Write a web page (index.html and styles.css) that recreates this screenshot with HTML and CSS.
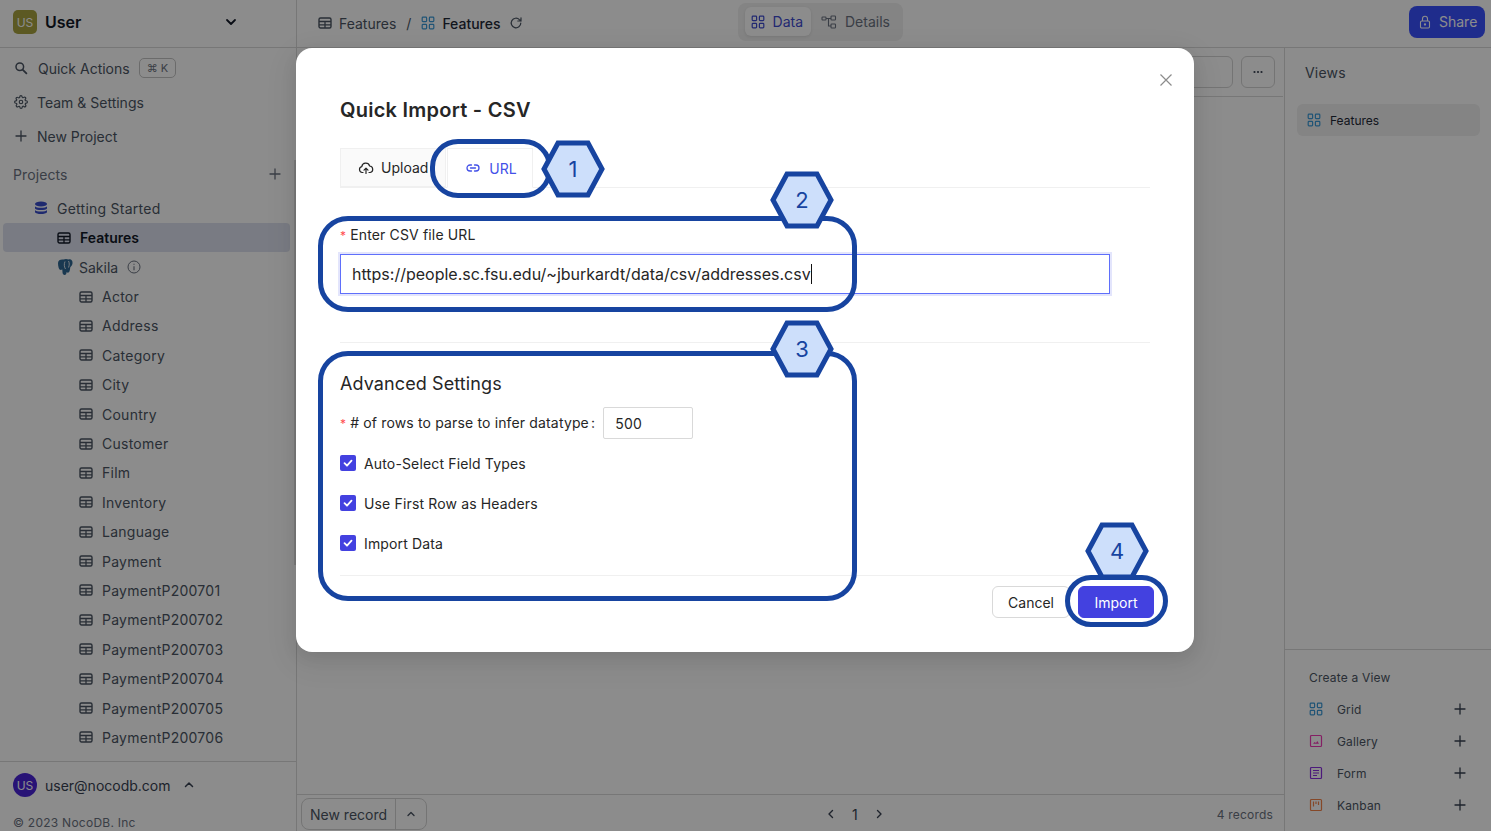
FILE: index.html
```html
<!DOCTYPE html>
<html lang="en">
<head>
    <meta charset="UTF-8">
    <title>NocoDB - Quick Import</title>
    <link rel="stylesheet" href="styles.css">
</head>
<body>
    <svg class="defs" width="0" height="0">
        <symbol id="i-table" viewBox="0 0 14 14"><rect x="1" y="2" width="12" height="10" rx="1.5" fill="none" stroke="currentColor" stroke-width="1.4"/><path d="M1 5.5h12M1 8.8h12M7 5.5V12" fill="none" stroke="currentColor" stroke-width="1.3"/></symbol>
        <symbol id="i-grid" viewBox="0 0 14 14"><g fill="none" stroke="currentColor" stroke-width="1.2"><rect x="1.2" y="1.2" width="4.4" height="4.4" rx=".8"/><rect x="8.4" y="1.2" width="4.4" height="4.4" rx=".8"/><rect x="1.2" y="8.4" width="4.4" height="4.4" rx=".8"/><rect x="8.4" y="8.4" width="4.4" height="4.4" rx=".8"/></g></symbol>
        <symbol id="i-plus" viewBox="0 0 14 14"><path d="M7 2v10M2 7h10" fill="none" stroke="currentColor" stroke-width="1.3" stroke-linecap="round"/></symbol>
    </svg>

    <div class="app">
        <aside class="sidebar">
            <div class="brand">
                <span class="brand-badge">US</span>
                <span class="brand-name">User</span>
                <svg class="brand-chevron" width="14" height="14" viewBox="0 0 14 14"><path d="M3 5l4 4 4-4" fill="none" stroke="currentColor" stroke-width="1.8" stroke-linecap="round" stroke-linejoin="round"/></svg>
            </div>
            <div class="side-menu">
                <div class="menu-item">
                    <svg width="14" height="14" viewBox="0 0 14 14"><circle cx="5.8" cy="5.8" r="3.8" fill="none" stroke="currentColor" stroke-width="1.5"/><path d="M8.6 8.6l3.8 3.8" stroke="currentColor" stroke-width="1.8" stroke-linecap="round"/></svg>
                    <span class="quick-label">Quick Actions</span><span class="kbd">⌘ K</span>
                </div>
                <div class="menu-item">
                    <svg width="14" height="14" viewBox="0 0 24 24" fill="none" stroke="currentColor" stroke-width="2"><circle cx="12" cy="12" r="3"/><path d="M19.4 15a1.65 1.65 0 0 0 .33 1.82l.06.06a2 2 0 1 1-2.83 2.83l-.06-.06a1.65 1.65 0 0 0-2.82 1.17V21a2 2 0 1 1-4 0v-.09a1.65 1.65 0 0 0-2.82-1.12l-.06.06a2 2 0 1 1-2.83-2.83l.06-.06a1.65 1.65 0 0 0-1.17-2.82H3a2 2 0 1 1 0-4h.09a1.65 1.65 0 0 0 1.12-2.82l-.06-.06a2 2 0 1 1 2.83-2.83l.06.06a1.65 1.65 0 0 0 2.82-1.17V3a2 2 0 1 1 4 0v.09a1.65 1.65 0 0 0 2.82 1.12l.06-.06a2 2 0 1 1 2.83 2.83l-.06.06a1.65 1.65 0 0 0 1.17 2.82H21a2 2 0 1 1 0 4h-.09a1.65 1.65 0 0 0-1.51 1z"/></svg>
                    <span>Team &amp; Settings</span>
                </div>
                <div class="menu-item">
                    <svg width="14" height="14"><use href="#i-plus"/></svg>
                    <span>New Project</span>
                </div>
            </div>
            <div class="projects-head">
                <span>Projects</span>
                <svg width="14" height="14"><use href="#i-plus"/></svg>
            </div>
            <div class="tree">
                <div class="tree-row project">
                    <svg class="db-icon" width="14" height="14" viewBox="0 0 14 14"><ellipse cx="7" cy="3" rx="6" ry="2.4" fill="currentColor"/><path d="M1 5.2c1 2 11 2 12 0v2.2c-1 2.2-11 2.2-12 0zM1 9c1 2 11 2 12 0v2.2c-1 2.4-11 2.4-12 0z" fill="currentColor"/></svg>
                    <span>Getting Started</span>
                </div>
                <div class="tree-row base active"><svg width="14" height="14"><use href="#i-table"/></svg><span>Features</span></div>
                <div class="tree-row base">
                    <svg class="pg-icon" width="18" height="18" viewBox="0 0 18 18"><path d="M2 5c0-3 3-4 5.500-3.500C9 .8 11 .8 12.500 1.500 15 .8 17 2.500 16.500 5.500c-.3 1.800-1.300 3-2.200 3.800-.2 1.500-.4 3-.8 4-.4 1.500-2 1.700-2.800.8-.4 1.500-.4 2.700-1.700 2.900-1.500.2-2.300-.8-2.500-2.400l-.2-3.100C4.500 12.500 3.300 11.800 2.700 10 2.200 8.500 2 6.500 2 5z" fill="currentColor"/><path d="M9 3.500c-1 2.500-1 5 .5 7.500M12.500 3c1 2 1 4 0 6.500" fill="none" stroke="#fff" stroke-width=".8"/></svg>
                    <span class="sakila">Sakila</span>
                    <svg class="info-icon" width="14" height="14" viewBox="0 0 14 14"><circle cx="7" cy="7" r="6" fill="none" stroke="currentColor" stroke-width="1"/><path d="M7 6.200v4M7 3.800v1" stroke="currentColor" stroke-width="1.100"/></svg>
                </div>
                <div class="tree-row table"><svg width="14" height="14"><use href="#i-table"/></svg><span>Actor</span></div>
                <div class="tree-row table"><svg width="14" height="14"><use href="#i-table"/></svg><span>Address</span></div>
                <div class="tree-row table"><svg width="14" height="14"><use href="#i-table"/></svg><span>Category</span></div>
                <div class="tree-row table"><svg width="14" height="14"><use href="#i-table"/></svg><span>City</span></div>
                <div class="tree-row table"><svg width="14" height="14"><use href="#i-table"/></svg><span>Country</span></div>
                <div class="tree-row table"><svg width="14" height="14"><use href="#i-table"/></svg><span>Customer</span></div>
                <div class="tree-row table"><svg width="14" height="14"><use href="#i-table"/></svg><span>Film</span></div>
                <div class="tree-row table"><svg width="14" height="14"><use href="#i-table"/></svg><span>Inventory</span></div>
                <div class="tree-row table"><svg width="14" height="14"><use href="#i-table"/></svg><span>Language</span></div>
                <div class="tree-row table"><svg width="14" height="14"><use href="#i-table"/></svg><span>Payment</span></div>
                <div class="tree-row table"><svg width="14" height="14"><use href="#i-table"/></svg><span>PaymentP200701</span></div>
                <div class="tree-row table"><svg width="14" height="14"><use href="#i-table"/></svg><span>PaymentP200702</span></div>
                <div class="tree-row table"><svg width="14" height="14"><use href="#i-table"/></svg><span>PaymentP200703</span></div>
                <div class="tree-row table"><svg width="14" height="14"><use href="#i-table"/></svg><span>PaymentP200704</span></div>
                <div class="tree-row table"><svg width="14" height="14"><use href="#i-table"/></svg><span>PaymentP200705</span></div>
                <div class="tree-row table"><svg width="14" height="14"><use href="#i-table"/></svg><span>PaymentP200706</span></div>
            </div>
            <div class="side-foot">
                <div class="user-row">
                    <span class="avatar">US</span>
                    <span>user@nocodb.com</span>
                    <svg width="12" height="12" viewBox="0 0 12 12"><path d="M2.500 7.500L6 4l3.500 3.500" fill="none" stroke="currentColor" stroke-width="1.500" stroke-linecap="round" stroke-linejoin="round"/></svg>
                </div>
                <div class="copyright">© 2023 NocoDB. Inc</div>
            </div>
            <div class="side-scroll"></div>
        </aside>

        <main class="main">
            <header class="topbar">
                <div class="crumbs">
                    <svg width="14" height="14"><use href="#i-table"/></svg>
                    <span>Features</span>
                    <span class="crumb-sep">/</span>
                    <svg class="grid-icon" width="14" height="14"><use href="#i-grid"/></svg>
                    <span class="crumb-current">Features</span>
                    <svg width="14" height="14" viewBox="0 0 14 14"><path d="M11.800 7a4.800 4.800 0 1 1-1.400-3.400L12 5M12 1.800V5H8.800" fill="none" stroke="currentColor" stroke-width="1.200" stroke-linecap="round" stroke-linejoin="round"/></svg>
                </div>
                <div class="mode-tabs">
                    <div class="mode-tab on"><svg width="14" height="14"><use href="#i-grid"/></svg>Data</div>
                    <div class="mode-tab">
                        <svg width="16" height="14" viewBox="0 0 16 14" fill="none" stroke="currentColor" stroke-width="1.100"><rect x="1" y="2" width="4" height="3" rx=".8"/><rect x="10" y="1" width="4.500" height="4" rx=".8"/><rect x="10" y="9" width="4.500" height="4" rx=".8"/><path d="M5 3.500h5M7.500 3.500V11H10"/></svg>
                        Details
                    </div>
                </div>
                <button class="share-btn" type="button">
                    <svg width="14" height="14" viewBox="0 0 14 14" fill="none" stroke="currentColor" stroke-width="1.100"><rect x="2.500" y="6" width="9" height="7" rx="1.200"/><path d="M4.500 6V3.800a2.500 2.500 0 0 1 5 0V6"/><circle cx="7" cy="9.500" r=".6" fill="currentColor"/></svg>
                    Share
                </button>
            </header>
            <div class="content">
                <section class="center">
                    <div class="toolbar">
                        <div class="tool-box wide"></div>
                        <div class="tool-box">
                            <svg width="14" height="14" viewBox="0 0 14 14"><circle cx="3.500" cy="7" r="1.100" fill="currentColor"/><circle cx="7" cy="7" r="1.100" fill="currentColor"/><circle cx="10.500" cy="7" r="1.100" fill="currentColor"/></svg>
                        </div>
                    </div>
                    <div class="grid-area"></div>
                    <div class="pager">
                        <div class="new-record">
                            <span class="new-label">New record</span>
                            <span class="new-caret"><svg width="10" height="10" viewBox="0 0 10 10"><path d="M2 6.500L5 3.500l3 3" fill="none" stroke="currentColor" stroke-width="1.400" stroke-linecap="round" stroke-linejoin="round"/></svg></span>
                        </div>
                        <div class="pages">
                            <svg width="12" height="12" viewBox="0 0 12 12"><path d="M7.500 2.500L4 6l3.500 3.500" fill="none" stroke="currentColor" stroke-width="1.400" stroke-linecap="round" stroke-linejoin="round"/></svg>
                            <span>1</span>
                            <svg width="12" height="12" viewBox="0 0 12 12"><path d="M4.500 2.500L8 6l-3.500 3.500" fill="none" stroke="currentColor" stroke-width="1.400" stroke-linecap="round" stroke-linejoin="round"/></svg>
                        </div>
                        <span class="count">4 records</span>
                    </div>
                </section>
                <aside class="views">
                    <div class="views-title">Views</div>
                    <div class="view-current"><svg class="grid-icon" width="14" height="14"><use href="#i-grid"/></svg><span>Features</span></div>
                    <div class="create-view">
                        <div class="create-title">Create a View</div>
                        <div class="create-row">
                            <svg class="grid-icon" width="14" height="14"><use href="#i-grid"/></svg><span>Grid</span>
                            <svg class="add" width="14" height="14"><use href="#i-plus"/></svg>
                        </div>
                        <div class="create-row">
                            <svg class="gallery-icon" width="14" height="14" viewBox="0 0 14 14"><rect x="1.500" y="1.500" width="11" height="11" rx="1" fill="none" stroke="currentColor" stroke-width="1.200"/><path d="M4 9.800l1.500-1.700L7 9l1.300-2 1.700 2.800z" fill="currentColor"/></svg><span>Gallery</span>
                            <svg class="add" width="14" height="14"><use href="#i-plus"/></svg>
                        </div>
                        <div class="create-row">
                            <svg class="form-icon" width="14" height="14" viewBox="0 0 14 14" fill="none" stroke="currentColor" stroke-width="1.200"><rect x="1.500" y="1.500" width="11" height="11" rx="1"/><path d="M4 4.500h6M4 7h6M4 9.500h4"/></svg><span>Form</span>
                            <svg class="add" width="14" height="14"><use href="#i-plus"/></svg>
                        </div>
                        <div class="create-row">
                            <svg class="kanban-icon" width="14" height="14" viewBox="0 0 14 14" fill="none" stroke="currentColor" stroke-width="1.200"><rect x="1.500" y="1.500" width="11" height="11" rx="1"/><path d="M4.500 3.500v5M7 3.500v2.500M9.500 3.500v3.500"/></svg><span>Kanban</span>
                            <svg class="add" width="14" height="14"><use href="#i-plus"/></svg>
                        </div>
                    </div>
                </aside>
            </div>
        </main>
    </div>

    <div class="mask"></div>

    <div class="modal">
        <button class="modal-close" type="button" aria-label="Close">
            <svg width="14" height="14" viewBox="0 0 14 14"><path d="M1.500 1.500l11 11M12.500 1.500l-11 11" fill="none" stroke="currentColor" stroke-width="1.200"/></svg>
        </button>
        <h2 class="modal-title">Quick Import - CSV</h2>
        <div class="tabs">
            <div class="tab">
                <svg width="16" height="16" viewBox="0 0 16 16" fill="none" stroke="currentColor" stroke-width="1.200" stroke-linecap="round" stroke-linejoin="round"><path d="M5 12.500H4.200A3 3 0 0 1 3.800 6.600 4 4 0 0 1 11.600 6a3.300 3.300 0 0 1 .6 6.500H11"/><path d="M8 13.500V8.500M6 10.200l2-2 2 2"/></svg>
                Upload
            </div>
            <div class="tab on">
                <svg width="16" height="16" viewBox="0 0 16 16" fill="none" stroke="currentColor" stroke-width="1.300" stroke-linecap="round"><path d="M6.500 5H5a3 3 0 0 0 0 6h1.500M9.500 5H11a3 3 0 0 1 0 6H9.500M5.500 8h5"/></svg>
                URL
            </div>
        </div>
        <div class="url-field">
            <label class="field-label" for="csvUrl"><span class="req">*</span>Enter CSV file URL</label>
            <div class="url-input" id="csvUrl">https://people.sc.fsu.edu/~jburkardt/data/csv/addresses.csv<span class="caret"></span></div>
        </div>
        <hr class="rule">
        <h3 class="adv-title">Advanced Settings</h3>
        <div class="rows-field">
            <label class="field-label"><span class="req">*</span># of rows to parse to infer datatype<span class="colon">:</span></label>
            <div class="rows-input">500</div>
        </div>
        <div class="check-row"><span class="check"><svg width="12" height="12" viewBox="0 0 12 12"><path d="M2.500 6.200l2.500 2.500 4.500-5" fill="none" stroke="#fff" stroke-width="1.800" stroke-linecap="round" stroke-linejoin="round"/></svg></span>Auto-Select Field Types</div>
        <div class="check-row"><span class="check"><svg width="12" height="12" viewBox="0 0 12 12"><path d="M2.500 6.200l2.500 2.500 4.500-5" fill="none" stroke="#fff" stroke-width="1.800" stroke-linecap="round" stroke-linejoin="round"/></svg></span>Use First Row as Headers</div>
        <div class="check-row"><span class="check"><svg width="12" height="12" viewBox="0 0 12 12"><path d="M2.500 6.200l2.500 2.500 4.500-5" fill="none" stroke="#fff" stroke-width="1.800" stroke-linecap="round" stroke-linejoin="round"/></svg></span>Import Data</div>
        <div class="modal-foot">
            <button class="btn" type="button">Cancel</button>
            <button class="btn primary" type="button">Import</button>
        </div>
    </div>

    <!-- annotations drawn on top of the screenshot -->
    <div class="ring ring-1"></div>
    <div class="ring ring-2"></div>
    <div class="ring ring-3"></div>
    <div class="ring ring-4"></div>
    <div class="hex hex-1"><svg width="64" height="58" viewBox="0 0 64 58"><polygon points="17,3 47,3 61,29 47,55 17,55 3,29"/></svg><span>1</span></div>
    <div class="hex hex-2"><svg width="64" height="58" viewBox="0 0 64 58"><polygon points="17,3 47,3 61,29 47,55 17,55 3,29"/></svg><span>2</span></div>
    <div class="hex hex-3"><svg width="64" height="58" viewBox="0 0 64 58"><polygon points="17,3 47,3 61,29 47,55 17,55 3,29"/></svg><span>3</span></div>
    <div class="hex hex-4"><svg width="64" height="58" viewBox="0 0 64 58"><polygon points="17,3 47,3 61,29 47,55 17,55 3,29"/></svg><span>4</span></div>
</body>
</html>
```

FILE: styles.css
```css
* {
    box-sizing: border-box;
}
html, body {
    margin: 0;
    height: 100%;
    overflow: hidden;
}
body {
    position: relative;
    font-family: Inter, "Noto Sans", sans-serif;
    font-size: 14px;
    color: #1f2937;
    background: #fff;
}
.defs {
    position: absolute;
}
svg {
    flex: none;
    display: block;
}

.app {
    display: grid;
    grid-template-columns: 297px 1fr;
    height: 831px;
}

/* sidebar */
.sidebar {
    position: relative;
    display: flex;
    flex-direction: column;
    border-right: 1px solid #d9d9d9;
    height: 831px;
    overflow: hidden;
}
.side-scroll {
    position: absolute;
    left: 294px;
    top: 160px;
    width: 2px;
    height: 405px;
    background: #dedede;
}
.brand {
    display: flex;
    align-items: center;
    height: 48px;
    flex: none;
    padding: 0 13px 3px;
    border-bottom: 1px solid #d9d9d9;
}
.brand-badge {
    width: 24px;
    height: 24px;
    border-radius: 5px;
    background: #a8a241;
    color: #fff;
    font-size: 12px;
    display: flex;
    align-items: center;
    justify-content: center;
}
.brand-name {
    margin-left: 8px;
    font-size: 16px;
    font-weight: 600;
    color: #111827;
}
.brand-chevron {
    margin-left: auto;
    margin-right: 45px;
    color: #111827;
}
.side-menu {
    padding-top: 3px;
    flex: none;
}
.menu-item {
    display: flex;
    align-items: center;
    gap: 9px;
    height: 34px;
    padding-left: 14px;
    color: #4b5563;
}
.quick-label {
    margin-left: 1px;
}
.kbd {
    border: 1px solid #c4c4c4;
    border-radius: 5px;
    padding: 0 7px;
    font-size: 11px;
    line-height: 18px;
    color: #6b7280;
}
.projects-head {
    display: flex;
    align-items: center;
    justify-content: space-between;
    flex: none;
    height: 36px;
    margin: 3px 0 1.700px;
    padding: 0 14px 0 13px;
    color: #6b7280;
    letter-spacing: .1px;
}
.tree {
    flex: 1;
    overflow: hidden;
}
.tree-row {
    display: flex;
    align-items: center;
    height: 29.4px;
    color: #4b5563;
    letter-spacing: .25px;
}
.tree-row.project {
    padding-left: 34px;
    gap: 9px;
}
.db-icon {
    color: #3a4ecb;
}
.tree-row.base {
    gap: 9px;
    margin: 0 6px 0 3px;
    padding-left: 54px;
    border-radius: 4px;
}
.tree-row.active {
    background: #dde1ee;
    color: #111827;
    font-weight: 600;
    letter-spacing: 0;
}
.pg-icon {
    color: #2f6792;
    margin-left: -1px;
    margin-right: -4px;
}
.sakila {
    letter-spacing: 0;
}
.info-icon {
    color: #6b7280;
}
.tree-row.table {
    padding-left: 79px;
    gap: 9px;
}
.side-foot {
    flex: none;
    height: 70px;
    border-top: 1px solid #d9d9d9;
    padding: 11px 13px 0;
}
.user-row {
    display: flex;
    align-items: center;
    gap: 8px;
    color: #374151;
}
.user-row svg {
    margin-left: 4px;
}
.avatar {
    width: 24px;
    height: 24px;
    border-radius: 50%;
    background: #4a24d8;
    color: #fff;
    font-size: 12px;
    display: flex;
    align-items: center;
    justify-content: center;
}
.copyright {
    margin-top: 18px;
    font-size: 12px;
    color: #6b7280;
    letter-spacing: .25px;
}

/* main */
.main {
    display: flex;
    flex-direction: column;
    min-width: 0;
    height: 831px;
}
.topbar {
    display: flex;
    align-items: center;
    flex: none;
    height: 48px;
    border-bottom: 1px solid #d9d9d9;
    padding: 0 6px 0 21px;
    position: relative;
}
.crumbs {
    display: flex;
    align-items: center;
    gap: 7px;
    margin-top: -1px;
    color: #4b5563;
}
.crumb-sep {
    margin: 0 3px;
}
.crumb-current {
    color: #1f2937;
    font-weight: 500;
    margin-right: 1px;
}
.grid-icon {
    color: #3b9ad8;
}
.mode-tabs {
    display: flex;
    align-items: center;
    gap: 4px;
    margin-left: 215px;
    height: 38px;
    width: 165px;
    padding: 0 7px;
    border-radius: 8px;
    background: #f0f0f0;
    margin-top: -4px;
}
.mode-tab {
    display: flex;
    align-items: center;
    gap: 8px;
    height: 29px;
    padding: 0 8px 0 6px;
    border-radius: 6px;
    color: #6b7280;
}
.mode-tab.on {
    background: #fff;
    color: #3f4ccf;
    box-shadow: 0 1px 3px rgba(0, 0, 0, .1);
}
.share-btn {
    display: flex;
    align-items: center;
    gap: 7px;
    margin-left: auto;
    height: 32px;
    width: 76px;
    padding: 0 0 0 9px;
    border: 0;
    border-radius: 8px;
    background: #3a50ff;
    color: #fff;
    font: inherit;
    margin-top: -4px;
}
.content {
    flex: 1;
    display: grid;
    grid-template-columns: 1fr 207px;
    min-height: 0;
}
.center {
    display: flex;
    flex-direction: column;
}
.toolbar {
    display: flex;
    align-items: center;
    justify-content: flex-end;
    gap: 8px;
    flex: none;
    height: 49px;
    margin-right: 1px;
    padding-right: 8px;
    border-bottom: 1px solid #d9d9d9;
}
.tool-box {
    display: flex;
    align-items: center;
    justify-content: center;
    width: 34px;
    height: 32px;
    border: 1px solid #d4d4d4;
    border-radius: 6px;
    color: #374151;
}
.tool-box.wide {
    width: 60px;
}
.grid-area {
    flex: 1;
}
.pager {
    display: flex;
    align-items: center;
    flex: none;
    height: 37px;
    border-top: 1px solid #d9d9d9;
    padding: 2px 11px 0 4px;
    position: relative;
}
.new-record {
    display: flex;
    height: 32px;
    border: 1px solid #d4d4d4;
    border-radius: 8px;
    color: #4b5563;
}
.new-label {
    display: flex;
    align-items: center;
    padding: 0 8px;
    border-right: 1px solid #d4d4d4;
}
.new-caret {
    display: flex;
    align-items: center;
    padding: 0 10px;
}
.pages {
    display: flex;
    align-items: center;
    gap: 15px;
    margin-left: 398px;
    color: #374151;
}
.count {
    margin-left: auto;
    font-size: 12px;
    color: #6b7280;
    letter-spacing: .2px;
}

/* right panel */
.views {
    display: flex;
    flex-direction: column;
    border-left: 1px solid #d9d9d9;
    padding: 0;
}
.views-title {
    padding: 16px 0 0 20px;
    color: #4b5563;
    letter-spacing: .2px;
    line-height: 17px;
}
.view-current {
    display: flex;
    align-items: center;
    gap: 9px;
    height: 32px;
    margin: 23px 11px 0 12px;
    padding-left: 10px;
    border-radius: 6px;
    background: #f0f0f0;
    font-size: 12px;
    color: #1f2937;
}
.create-view {
    margin-top: auto;
    height: 182px;
    border-top: 1px solid #d9d9d9;
    padding: 20px 24px 0;
}
.create-title {
    font-size: 12px;
    line-height: 16px;
    color: #4b5563;
    letter-spacing: .2px;
    margin-bottom: 7px;
}
.create-row {
    display: flex;
    align-items: center;
    gap: 14px;
    height: 32px;
    font-size: 12px;
    color: #4b5563;
    letter-spacing: .15px;
}
.create-row .add {
    margin-left: auto;
    color: #374151;
}
.gallery-icon { color: #f039b6; }
.form-icon { color: #8b2fe0; }
.kanban-icon { color: #f3834a; }

.mask {
    position: absolute;
    inset: 0;
    background: rgba(0, 0, 0, .45);
}

/* modal */
.modal {
    position: absolute;
    left: 296px;
    top: 48px;
    width: 898px;
    height: 604px;
    padding: 0 44px;
    background: #fff;
    border-radius: 16px;
    box-shadow: 0 6px 16px rgba(0, 0, 0, .08), 0 9px 28px 8px rgba(0, 0, 0, .05);
    color: #262626;
}
.modal-close {
    position: absolute;
    right: 21px;
    top: 25px;
    padding: 0;
    border: 0;
    background: none;
    color: #8c8c8c;
}
.modal-title {
    margin: 0;
    padding-top: 50px;
    font-size: 20px;
    line-height: 24px;
    font-weight: 600;
    letter-spacing: .25px;
    color: #262626;
}
.tabs {
    display: flex;
    gap: 1px;
    height: 40px;
    margin-top: 26px;
    border-bottom: 1px solid #f0f0f0;
}
.tab {
    display: flex;
    align-items: center;
    gap: 7px;
    padding: 0 17px;
    border: 1px solid #f0f0f0;
    background: #fafafa;
}
.tab.on {
    background: #fff;
    border-bottom-color: #fff;
    color: #4351e8;
    gap: 8px;
    height: 40px;
    width: 86px;
}
.url-field {
    padding-top: 38px;
}
.field-label {
    display: block;
    letter-spacing: .15px;
    line-height: 17px;
}
.req {
    color: #ff4d4f;
    font-size: 12px;
    margin-right: 4px;
}
.url-input {
    display: flex;
    align-items: center;
    height: 40px;
    width: 770px;
    margin-top: 10px;
    padding: 0 11px;
    border: 1px solid #5f6ffb;
    box-shadow: 0 0 0 2px rgba(67, 81, 232, .15);
    font-size: 16px;
}
.caret {
    width: 1px;
    height: 20px;
    background: #111;
}
.rule {
    margin: 48px 0 0;
    border: 0;
    border-top: 1px solid #f0f0f0;
}
.adv-title {
    margin: 0;
    padding-top: 30px;
    font-size: 18px;
    line-height: 22px;
    font-weight: 400;
    letter-spacing: .1px;
}
.rows-field {
    display: flex;
    align-items: center;
    gap: 8px;
    margin: 12px 0 4px;
}
.colon {
    margin-left: 2px;
}
.rows-input {
    display: flex;
    align-items: center;
    width: 90px;
    height: 32px;
    padding: 0 11px;
    border: 1px solid #d9d9d9;
    border-radius: 2px;
    letter-spacing: .3px;
}
.check-row {
    display: flex;
    align-items: center;
    gap: 8px;
    height: 40px;
    letter-spacing: .15px;
}
.check {
    display: flex;
    align-items: center;
    justify-content: center;
    width: 16px;
    height: 16px;
    border-radius: 2px;
    background: #4341e0;
}
.modal-foot {
    display: flex;
    justify-content: flex-end;
    gap: 8px;
    position: absolute;
    left: 44px;
    right: 44px;
    top: 527px;
    height: 44px;
    padding-top: 10px;
    border-top: 1px solid #f0f0f0;
}
.btn {
    height: 32px;
    padding: 0 15px;
    border: 1px solid #d9d9d9;
    border-radius: 6px;
    background: #fff;
    color: #262626;
    font: inherit;
}
.btn.primary {
    width: 76px;
    margin-right: -4px;
    background: #4341e0;
    border-color: #4341e0;
    color: #fff;
}

/* annotations */
.ring {
    position: absolute;
    border: 5px solid #1744a0;
}
.ring-1 { left: 430px; top: 139px; width: 122px; height: 59px; border-radius: 28px; }
.ring-2 { left: 318px; top: 216px; width: 539px; height: 96px; border-radius: 30px; }
.ring-3 { left: 318px; top: 351px; width: 539px; height: 250px; border-radius: 30px; }
.ring-4 { left: 1065px; top: 575px; width: 103px; height: 52px; border-radius: 26px; }
.hex {
    position: absolute;
    width: 64px;
    height: 58px;
    display: flex;
    align-items: center;
    justify-content: center;
}
.hex svg {
    position: absolute;
    left: 0;
    top: 0;
}
.hex polygon {
    fill: #cddffb;
    stroke: #1744a0;
    stroke-width: 5;
}
.hex span {
    position: relative;
    font-size: 22px;
    color: #1744a0;
}
.hex-1 { left: 541px; top: 140px; }
.hex-2 { left: 770px; top: 171px; }
.hex-3 { left: 770px; top: 320px; }
.hex-4 { left: 1085px; top: 522px; }
```
